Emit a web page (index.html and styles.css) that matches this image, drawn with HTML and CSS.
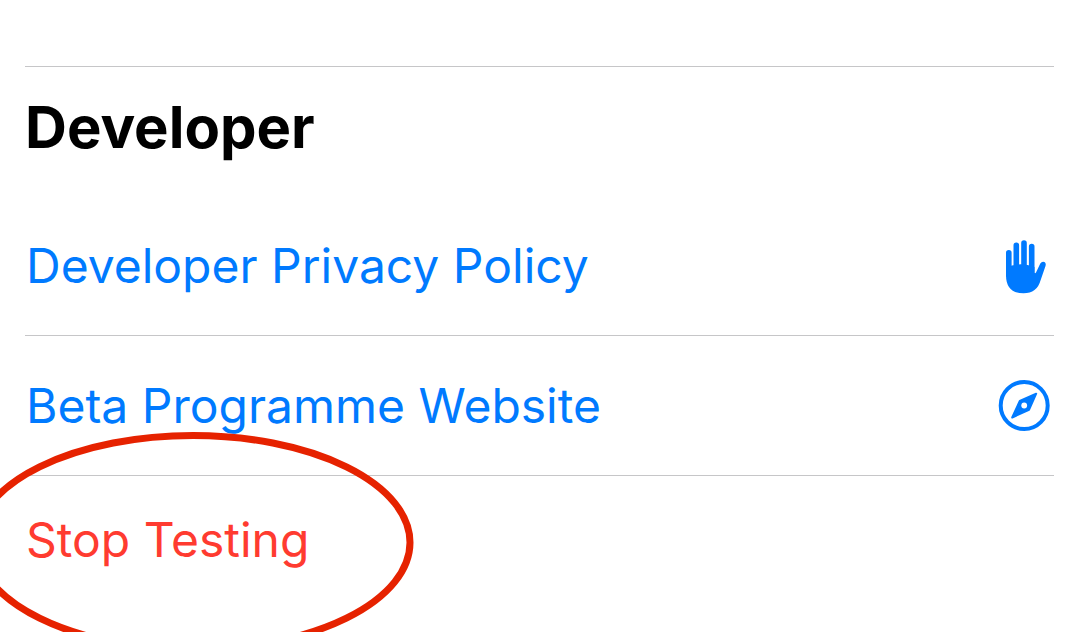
FILE: index.html
```html
<!DOCTYPE html>
<html lang="en-GB">
<head>
<meta charset="utf-8">
<meta name="viewport" content="width=device-width, initial-scale=1">
<title>Developer</title>
<link rel="stylesheet" href="styles.css">
</head>
<body>
<main class="panel">
  <section class="section">
    <h1 class="title">Developer</h1>
    <a class="row" href="#privacy">
      <span class="label">Developer Privacy Policy</span>
      <svg class="icon" viewBox="0 0 56 56" aria-hidden="true">
        <g fill="none" stroke="currentColor" stroke-width="5.6" stroke-linecap="round">
          <path d="M12.8 14.700V37M20.300 7.200V32M28 5V32M35.700 8.500V34"/>
        </g>
        <path fill="currentColor" d="M10 29.500Q24 23.500 38.500 29V34.500Q39 36 40 34.500L44.300 25.500Q46 22.800 48.500 24Q50.300 25 49.500 28L44.500 42.500Q41 55.300 27.500 55.300Q10 55.300 10 37Z"/>
      </svg>
    </a>
    <a class="row" href="#website">
      <span class="label">Beta Programme Website</span>
      <svg class="icon" viewBox="0 0 56 56" aria-hidden="true">
        <circle cx="28.200" cy="27.500" r="23.500" fill="none" stroke="currentColor" stroke-width="4"/>
        <path fill="currentColor" stroke="currentColor" stroke-width="2" stroke-linejoin="round" d="M40.200 15.700L33 31.800L16.200 39.500L23.800 23Z"/>
        <circle cx="28.200" cy="27.500" r="2.900" fill="#fff"/>
      </svg>
    </a>
    <div class="stop-row">
      <button class="stop" type="button">Stop Testing</button>
      <svg class="ring" viewBox="0 0 440 220" aria-hidden="true">
        <ellipse cx="213" cy="110.500" rx="217" ry="107"/>
      </svg>
    </div>
  </section>
</main>
</body>
</html>
```
FILE: styles.css
```css
* { box-sizing: border-box; }
body { margin: 0; background: #fff; font-family: Inter, "Liberation Sans", sans-serif; }
.panel { min-height: 100vh; padding: 66px 22px 0 25px; overflow: hidden; }
.section { border-top: 1px solid #c6c6c8; }
.title { margin: 0; padding: 24px 0 33px; font-size: 58px; line-height: 72px; font-weight: 700; }
.row { display: flex; align-items: center; justify-content: space-between; min-height: 140px; padding: 0 2px 0 1px; border-bottom: 1px solid #c6c6c8; color: #007aff; font-size: 48px; line-height: 60px; text-decoration: none; }
.label { padding-top: 1px; }
.icon { width: 56px; height: 56px; flex: none; }
.stop-row { position: relative; padding: 34px 0 34px 1px; }
.stop { border: 0; padding: 0; background: none; color: #ff3b30; font: inherit; font-size: 48px; line-height: 60px; }
.ring { position: absolute; left: -45px; top: -44px; width: 440px; height: 220px; overflow: visible; pointer-events: none; fill: none; stroke: #e62200; stroke-width: 7px; }
```
